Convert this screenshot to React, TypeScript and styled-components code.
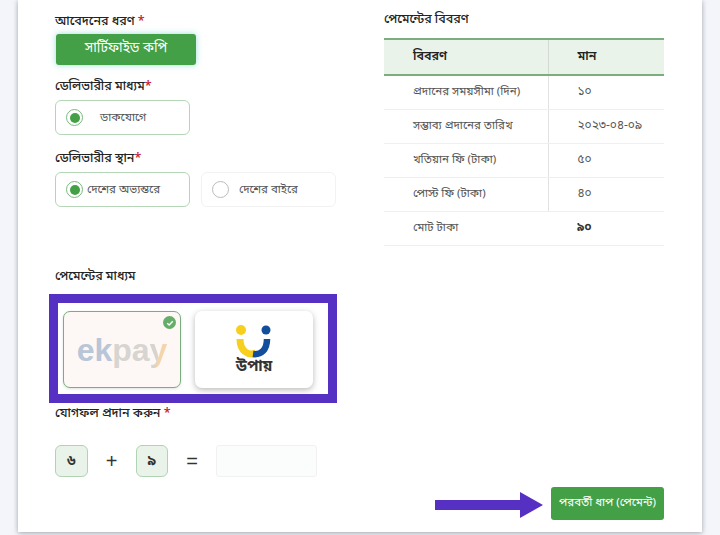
import React from "react";
import styled, { createGlobalStyle } from "styled-components";

const GlobalStyle = createGlobalStyle`
  html, body {
    margin: 0;
    padding: 0;
    height: 535px;
    overflow: hidden;
    background: #f3f5fb;
    font-family: "Noto Sans Bengali", "Noto Sans", "Liberation Sans", sans-serif;
    color: #2a2a2a;
  }
  * { box-sizing: border-box; }
`;

const Page = styled.div`
  width: 720px;
  height: 535px;
  padding: 0 18px 3px;
`;

const Card = styled.main`
  position: relative;
  height: 532px;
  background: #fff;
  padding: 0 38px 0 37px;
  box-shadow: 0 1px 5px rgba(60, 60, 70, 0.45);
`;

const Top = styled.div`
  display: flex;
  height: 267px;
`;

const LeftCol = styled.section`
  width: 329px;
  padding-top: 12px;
`;

const RightCol = styled.section`
  width: 280px;
  margin-left: auto;
  padding-top: 10px;
`;

const Label = styled.div<{ $mt?: number }>`
  font-size: 12.5px;
  line-height: 20px;
  font-weight: 500;
  color: #222;
  margin-top: ${(p) => p.$mt ?? 0}px;
`;

const Req = styled.span`
  color: #c4162a;
`;

const CopyButton = styled.div`
  width: 140px;
  height: 31px;
  margin: 2px 0 0 1px;
  border-radius: 3px;
  background: #43a047;
  color: #fff;
  font-size: 13.5px;
  line-height: 30px;
  text-align: center;
  box-shadow: 0 0 6px rgba(80, 190, 190, 0.55);
`;

const OptionRow = styled.div`
  display: flex;
  gap: 11px;
  margin-top: 3px;
`;

const Option = styled.div<{ $on?: boolean; $gap: number }>`
  width: 135px;
  height: 35px;
  display: flex;
  align-items: center;
  gap: ${(p) => p.$gap}px;
  padding-left: 10px;
  border: 1px solid ${(p) => (p.$on ? "#b4d6b6" : "#f2f2f2")};
  border-radius: 6px;
  font-size: 11.5px;
  color: #555;
`;

const Radio = styled.span<{ $on?: boolean }>`
  flex: none;
  width: 17px;
  height: 17px;
  border-radius: 50%;
  border: 1.5px solid ${(p) => (p.$on ? "#7db880" : "#bcbcbc")};
  display: flex;
  align-items: center;
  justify-content: center;
  &::after {
    content: "";
    display: ${(p) => (p.$on ? "block" : "none")};
    width: 10px;
    height: 10px;
    border-radius: 50%;
    background: #43a047;
  }
`;

const TableTitle = styled.h2`
  margin: 0 0 8px;
  font-size: 12.5px;
  line-height: 20px;
  font-weight: 500;
  color: #222;
`;

const Table = styled.table`
  width: 280px;
  border-collapse: collapse;
  table-layout: fixed;
  font-size: 11.5px;
  color: #555;
`;

const Th = styled.th<{ $w?: number }>`
  width: ${(p) => (p.$w ? `${p.$w}px` : "auto")};
  height: 36px;
  padding: 0 0 0 29px;
  text-align: left;
  font-size: 12.5px;
  font-weight: 600;
  color: #222;
  background: #e9f3ea;
  border-top: 2px solid #7bad7e;
  border-bottom: 2px solid #7bad7e;
  & + & {
    border-left: 1px solid #d5d9d5;
  }
`;

const Td = styled.td<{ $strong?: boolean }>`
  height: 34px;
  padding: 0 0 0 29px;
  border-bottom: 1px solid #efefef;
  font-weight: ${(p) => (p.$strong ? 700 : 400)};
  color: ${(p) => (p.$strong ? "#333" : "#555")};
  & + & {
    border-left: 1px solid #e2e2e2;
    font-size: 12px;
  }
`;

const LastTd = styled(Td)`
  & + & {
    border-left: none;
  }
`;

const PaymentArea = styled.section`
  margin-top: 0;
`;

const Methods = styled.div`
  display: flex;
  gap: 14px;
  margin: 24px 0 0 8px;
  height: 77px;
`;

const Method = styled.div<{ $on?: boolean }>`
  position: relative;
  width: 118px;
  height: 77px;
  border-radius: 7px;
  display: flex;
  align-items: center;
  justify-content: center;
  background: ${(p) => (p.$on ? "#fdf8f5" : "#fff")};
  border: ${(p) => (p.$on ? "1px solid #7bad7e" : "none")};
  box-shadow: ${(p) => (p.$on ? "0 1px 3px rgba(0,0,0,.12)" : "0 2px 6px rgba(0,0,0,.28)")};
`;

const CheckBadge = styled.span`
  position: absolute;
  top: 4px;
  right: 4px;
  width: 13px;
  height: 13px;
  border-radius: 50%;
  background: #66ad6a;
  display: flex;
  align-items: center;
  justify-content: center;
`;

const EkpayWord = styled.span`
  font-family: "Liberation Sans", Arial, sans-serif;
  font-size: 32px;
  line-height: 36px;
  font-weight: 700;
  color: #b9c6d8;
`;

const EkpayPale = styled.span`
  color: #d8d4d0;
`;

const EkpayTail = styled.span`
  background: linear-gradient(100deg, #d8d3cd 52%, #f3d5ab 52%);
  -webkit-background-clip: text;
  background-clip: text;
  color: transparent;
`;

const UpayMark = styled.div`
  display: flex;
  flex-direction: column;
  align-items: center;
  font-size: 15.5px;
  font-weight: 700;
  line-height: 18px;
  color: #333;
`;

const Captcha = styled.div`
  display: flex;
  align-items: center;
  margin: 21px 0 0;
  height: 32px;
`;

const Digit = styled.div`
  width: 32.5px;
  height: 32px;
  border: 1px solid #b0d4b2;
  border-radius: 6px;
  background: #e9f3ea;
  display: flex;
  align-items: center;
  justify-content: center;
  font-size: 14px;
  font-weight: 700;
  color: #333;
`;

const Sign = styled.div`
  width: 48px;
  text-align: center;
  font-size: 20px;
  color: #333;
  font-family: "Liberation Sans", Arial, sans-serif;
`;

const AnswerInput = styled.div`
  width: 101px;
  height: 32px;
  border: 1px solid #f0f2f0;
  border-radius: 3px;
  background: #fbfdfc;
`;

const NextButton = styled.div`
  position: absolute;
  left: 533px;
  top: 487px;
  width: 113px;
  height: 33px;
  border-radius: 3px;
  background: #43a047;
  color: #fff;
  font-size: 11.5px;
  line-height: 32px;
  text-align: center;
`;

const Annotation = styled.div`
  position: absolute;
  left: 31px;
  top: 294px;
  width: 288px;
  height: 109px;
  border: 9px solid #5630c2;
  pointer-events: none;
`;

const ArrowMark = styled.svg`
  position: absolute;
  left: 417px;
  top: 491px;
`;

const UpayLogo = () => (
  <svg width="38" height="34" viewBox="0 0 38 34">
    <circle cx="6" cy="6" r="5" fill="#f7cf1e" />
    <circle cx="31" cy="6" r="4.5" fill="#124e9c" />
    <path d="M5 15 C5 27 13 32 21 29" fill="none" stroke="#f7cf1e" strokeWidth="7" />
    <path d="M32 15 C32 26 26 31 18 30" fill="none" stroke="#124e9c" strokeWidth="6.5" />
  </svg>
);

export default function App() {
  return (
    <Page>
      <GlobalStyle />
      <Card>
        <Top>
          <LeftCol>
            <Label>আবেদনের ধরণ <Req>*</Req></Label>
            <CopyButton>সার্টিফাইড কপি</CopyButton>
            <Label $mt={12}>ডেলিভারীর মাধ্যম<Req>*</Req></Label>
            <OptionRow>
              <Option $on $gap={17}>
                <Radio $on />
                ডাকযোগে
              </Option>
            </OptionRow>
            <Label $mt={14}>ডেলিভারীর স্থান<Req>*</Req></Label>
            <OptionRow>
              <Option $on $gap={4}>
                <Radio $on />
                দেশের অভ্যন্তরে
              </Option>
              <Option $gap={10}>
                <Radio />
                দেশের বাইরে
              </Option>
            </OptionRow>
          </LeftCol>
          <RightCol>
            <TableTitle>পেমেন্টের বিবরণ</TableTitle>
            <Table>
              <thead>
                <tr>
                  <Th $w={164}>বিবরণ</Th>
                  <Th>মান</Th>
                </tr>
              </thead>
              <tbody>
                {rows.map((row) => (
                  <tr key={row.label}>
                    <Td>{row.label}</Td>
                    <Td>{row.value}</Td>
                  </tr>
                ))}
                <tr>
                  <LastTd>মোট টাকা</LastTd>
                  <LastTd $strong>৯০</LastTd>
                </tr>
              </tbody>
            </Table>
          </RightCol>
        </Top>
        <PaymentArea>
          <Label>পেমেন্টের মাধ্যম</Label>
          <Methods>
            <Method $on>
              <EkpayWord>ek<EkpayPale>pa</EkpayPale><EkpayTail>y</EkpayTail></EkpayWord>
              <CheckBadge>
                <svg width="8" height="8" viewBox="0 0 8 8">
                  <path d="M1.2 4.2 L3.2 6 L6.8 2.2" fill="none" stroke="#fff" strokeWidth="1.4" />
                </svg>
              </CheckBadge>
            </Method>
            <Method>
              <UpayMark>
                <UpayLogo />
                উপায়
              </UpayMark>
            </Method>
          </Methods>
          <Label $mt={16}>যোগফল প্রদান করুন <Req>*</Req></Label>
          <Captcha>
            <Digit>৬</Digit>
            <Sign>+</Sign>
            <Digit>৯</Digit>
            <Sign>=</Sign>
            <AnswerInput />
          </Captcha>
        </PaymentArea>
        <Annotation />
        <ArrowMark width="110" height="28" viewBox="0 0 110 28">
          <path d="M0 9 H85 V1 L108 14 L85 27 V19 H0 Z" fill="#5630c2" />
        </ArrowMark>
        <NextButton>পরবর্তী ধাপ (পেমেন্ট)</NextButton>
      </Card>
    </Page>
  );
}

const rows = [
  { label: "প্রদানের সময়সীমা (দিন)", value: "১০" },
  { label: "সম্ভাব্য প্রদানের তারিখ", value: "২০২৩-০৪-০৯" },
  { label: "খতিয়ান ফি (টাকা)", value: "৫০" },
  { label: "পোস্ট ফি (টাকা)", value: "৪০" },
];
